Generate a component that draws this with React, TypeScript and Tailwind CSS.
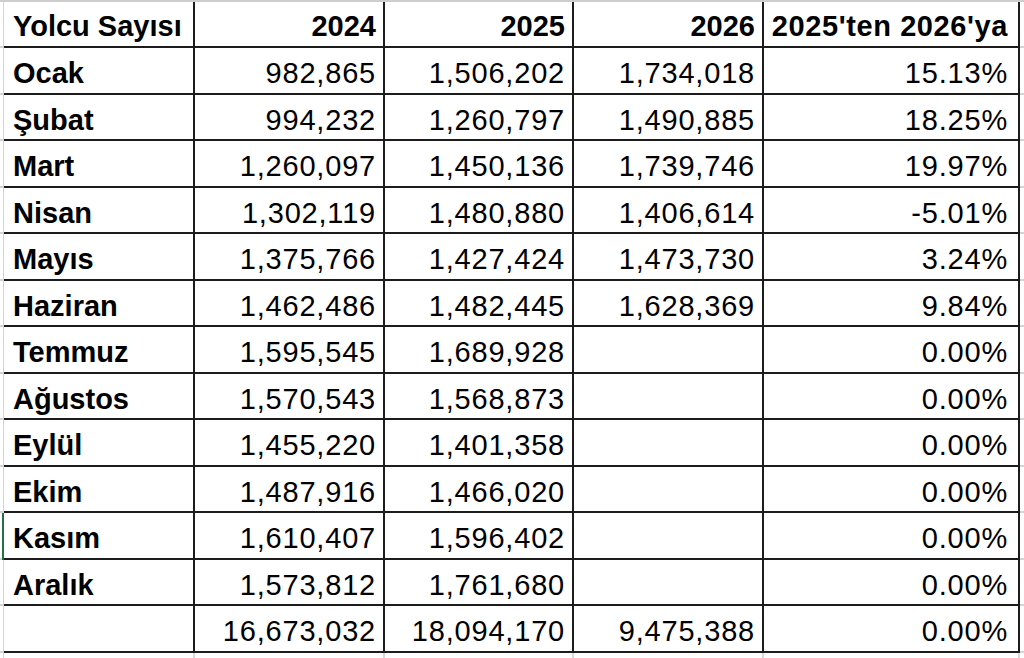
import React from "react";

type Row = { label: string; a: string; b: string; c: string; p: string };

const rows: Row[] = [
  { label: "Ocak", a: "982,865", b: "1,506,202", c: "1,734,018", p: "15.13%" },
  { label: "Şubat", a: "994,232", b: "1,260,797", c: "1,490,885", p: "18.25%" },
  { label: "Mart", a: "1,260,097", b: "1,450,136", c: "1,739,746", p: "19.97%" },
  { label: "Nisan", a: "1,302,119", b: "1,480,880", c: "1,406,614", p: "-5.01%" },
  { label: "Mayıs", a: "1,375,766", b: "1,427,424", c: "1,473,730", p: "3.24%" },
  { label: "Haziran", a: "1,462,486", b: "1,482,445", c: "1,628,369", p: "9.84%" },
  { label: "Temmuz", a: "1,595,545", b: "1,689,928", c: "", p: "0.00%" },
  { label: "Ağustos", a: "1,570,543", b: "1,568,873", c: "", p: "0.00%" },
  { label: "Eylül", a: "1,455,220", b: "1,401,358", c: "", p: "0.00%" },
  { label: "Ekim", a: "1,487,916", b: "1,466,020", c: "", p: "0.00%" },
  { label: "Kasım", a: "1,610,407", b: "1,596,402", c: "", p: "0.00%" },
  { label: "Aralık", a: "1,573,812", b: "1,761,680", c: "", p: "0.00%" },
  { label: "", a: "16,673,032", b: "18,094,170", c: "9,475,388", p: "0.00%" },
];

const cell = "flex items-center border-r-2 border-b-2 border-[#1c1c1c] pt-[7px]";
const num = cell + " justify-end pr-[7px] font-normal tracking-[0.8px]";
const hcell = "flex items-center justify-end border-r-2 border-b-2 border-[#1c1c1c] pt-[4px]";

export default function App() {
  return (
    <div
      className="w-[1024px] h-[658px] bg-white overflow-hidden flex flex-col text-black text-[29px] leading-none"
      style={{ fontFamily: '"Liberation Sans", Arial, sans-serif' }}
    >
      <div className="h-[2px] bg-[#cdcdcd] shrink-0" />
      {/* header */}
      <div className="grid grid-cols-[4px_191px_190px_189px_190px_256px_4px] h-[46px] shrink-0 font-bold">
        <div className="border-r border-b-2 border-r-[#d4d4d4] border-b-[#d4d4d4]" />
        <div className="flex items-center border-r-2 border-b-2 border-[#1c1c1c] pt-[4px] pl-[9px]">Yolcu Sayısı</div>
        <div className={hcell + " pr-[7px]"}>2024</div>
        <div className={hcell + " pr-[7px]"}>2025</div>
        <div className={hcell + " pr-[7px]"}>2026</div>
        <div className={hcell + " pr-[10px] tracking-[0.6px]"}>2025'ten 2026'ya</div>
        <div className="border-b-2 border-[#d4d4d4]" />
      </div>
      {rows.map((r, i) => {
        const selected = r.label === "Kasım";
        return (
          <div
            key={i}
            className="grid grid-cols-[4px_191px_190px_189px_190px_256px_4px] h-[46.5px] shrink-0"
          >
            {selected ? (
              <div className="flex">
                <div className="w-[2px] border-b-2 border-[#d4d4d4]" />
                <div className="w-[2px] bg-[#217346]" />
              </div>
            ) : (
              <div className="border-r border-b-2 border-r-[#d4d4d4] border-b-[#d4d4d4]" />
            )}
            <div className={cell + " pl-[9px] font-bold"}>{r.label}</div>
            <div className={num}>{r.a}</div>
            <div className={num}>{r.b}</div>
            <div className={num}>{r.c}</div>
            <div className={num + " pr-[10px]"}>{r.p}</div>
            <div className="border-b-2 border-[#d4d4d4]" />
          </div>
        );
      })}
      <div className="grid grid-cols-[4px_191px_190px_189px_190px_256px_4px] flex-1">
        <div className="border-r border-[#d4d4d4]" />
        <div className="border-r-2 border-[#d9d9d9]" />
        <div className="border-r-2 border-[#d9d9d9]" />
        <div className="border-r-2 border-[#d9d9d9]" />
        <div className="border-r-2 border-[#d9d9d9]" />
        <div className="border-r-2 border-[#d9d9d9]" />
        <div />
      </div>
    </div>
  );
}
